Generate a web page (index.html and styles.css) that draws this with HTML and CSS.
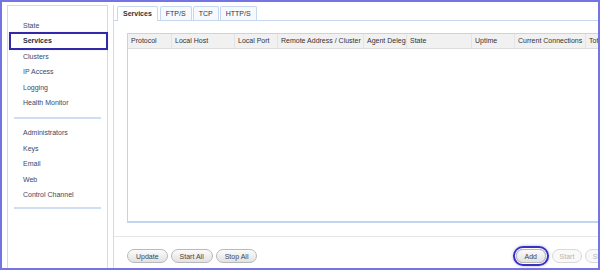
FILE: index.html
```html
<!DOCTYPE html>
<html lang="en">
<head>
  <meta charset="UTF-8" />
  <title>Services</title>
  <link rel="stylesheet" href="styles.css">
</head>
<body>
  <div class="frame">
    <div class="sidebar">
      <ul class="nav">
        <li>State</li>
        <li class="active">Services</li>
        <li>Clusters</li>
        <li>IP Access</li>
        <li>Logging</li>
        <li>Health Monitor</li>
      </ul>
      <div class="sep"></div>
      <ul class="nav nav-second">
        <li>Administrators</li>
        <li>Keys</li>
        <li>Email</li>
        <li>Web</li>
        <li>Control Channel</li>
      </ul>
      <div class="sep sep-last"></div>
    </div>

    <div class="main">
      <div class="tabs">
        <div class="tab active">Services</div>
        <div class="tab">FTP/S</div>
        <div class="tab">TCP</div>
        <div class="tab">HTTP/S</div>
      </div>
      <div class="panel">
        <div class="grid">
          <div class="grid-head">
            <div class="col c-proto">Protocol</div>
            <div class="col c-host">Local Host</div>
            <div class="col c-port">Local Port</div>
            <div class="col c-remote">Remote Address / Cluster</div>
            <div class="col c-agent">Agent Delegate</div>
            <div class="col c-state">State</div>
            <div class="col c-uptime">Uptime</div>
            <div class="col c-cur">Current Connections</div>
            <div class="col c-total">Total Connections</div>
          </div>
        </div>
        <div class="toolbar">
          <div class="btn-group">
            <button class="btn">Update</button>
            <button class="btn">Start All</button>
            <button class="btn">Stop All</button>
          </div>
          <div class="btn-group btn-group-right">
            <button class="btn btn-focus">Add</button>
            <button class="btn" disabled>Start</button>
            <button class="btn" disabled>Stop</button>
          </div>
        </div>
      </div>
    </div>
  </div>
</body>
</html>
```

FILE: styles.css
```css
body {
  margin: 0;
  font-family: "Liberation Sans", Arial, sans-serif;
  font-size: 7px;
  color: #333;
  background: #fff;
}
.frame {
  width: 600px;
  height: 270px;
  box-sizing: border-box;
  border: 2px solid #7474e4;
  display: flex;
  overflow: hidden;
  background: #fff;
}
.sidebar {
  flex: none;
  width: 99px;
  margin: 3px 0 0 5px;
  border: 1px solid #cddcf2;
  border-bottom: none;
}
.nav {
  list-style: none;
  margin: 0;
  padding: 12px 0 0;
}
.nav li {
  height: 15.4px;
  line-height: 15.4px;
  margin-left: 2px;
  padding-left: 13px;
  color: #3b4866;
}
.nav li.active {
  font-weight: bold;
  color: #222c44;
  outline: 2px solid #3128aa;
  outline-offset: -1px;
  box-shadow: 0 0 2px rgba(49, 40, 170, 0.5);
}
.nav-second {
  padding-top: 6px;
}
.sep {
  height: 2px;
  margin: 7px 6px 0;
  background: #cfdef3;
}
.sep-last {
  margin-top: 5px;
}
.main {
  flex: none;
  width: 514px;
  margin: 3px 0 0 5px;
  border-left: 1px solid #cddcf2;
}
.tabs {
  display: flex;
  gap: 1px;
  padding: 1px 0 0 3px;
  height: 14px;
  border-bottom: 1px solid #c6d7f0;
}
.tab {
  height: 13px;
  line-height: 13px;
  padding: 0 5px;
  border: 1px solid #c6d7f0;
  border-bottom: none;
  border-radius: 2px 2px 0 0;
  background: #f6f9fd;
  color: #333;
}
.tab.active {
  height: 14px;
  padding: 0 5px;
  margin-right: 1px;
  font-weight: bold;
  background: #fff;
}
.panel {
  padding: 12px 0 0 13px;
}
.grid {
  height: 187px;
  border: 1px solid #c3d4ef;
  border-bottom-width: 2px;
  border-right: none;
  overflow: hidden;
}
.grid-head {
  display: flex;
  height: 14px;
  line-height: 14px;
  background: #f1f1f1;
  border-bottom: 1px solid #dcdcdc;
  white-space: nowrap;
}
.col {
  flex: none;
  padding-left: 3px;
  border-right: 1px solid #e4e4e4;
  overflow: hidden;
  box-sizing: border-box;
}
.c-proto { width: 44px; }
.c-host { width: 63px; }
.c-port { width: 43px; }
.c-remote { width: 86px; }
.c-agent { width: 43px; }
.c-state { width: 65px; }
.c-uptime { width: 43px; }
.c-cur { width: 71px; }
.c-total { width: 80px; }
.toolbar {
  display: flex;
  justify-content: space-between;
  margin: 13px 0 0 -13px;
  padding: 12px 13px 0;
  border-top: 1px solid #e6e6e6;
}
.btn-group {
  display: flex;
  gap: 3px;
}
.btn {
  height: 14px;
  padding: 0 8px;
  font-family: inherit;
  font-size: 7px;
  color: #444;
  border: 1px solid #b9b9b9;
  border-radius: 8px;
  background: linear-gradient(#fbfbfb, #e2e2e2);
}
.btn-group-right .btn {
  min-width: 30px;
  padding: 0 6px;
}
.btn:disabled {
  color: #b5b5b5;
  border-color: #d9d9d9;
  background: #f9f9f9;
}
.btn-group-right .btn-focus {
  margin-right: 3px;
  padding: 0 8px;
  box-shadow: 0 0 0 1px #fff, 0 0 0 3px #3a30c2, 0 0 3px 3px rgba(58, 48, 194, 0.4);
}
```
